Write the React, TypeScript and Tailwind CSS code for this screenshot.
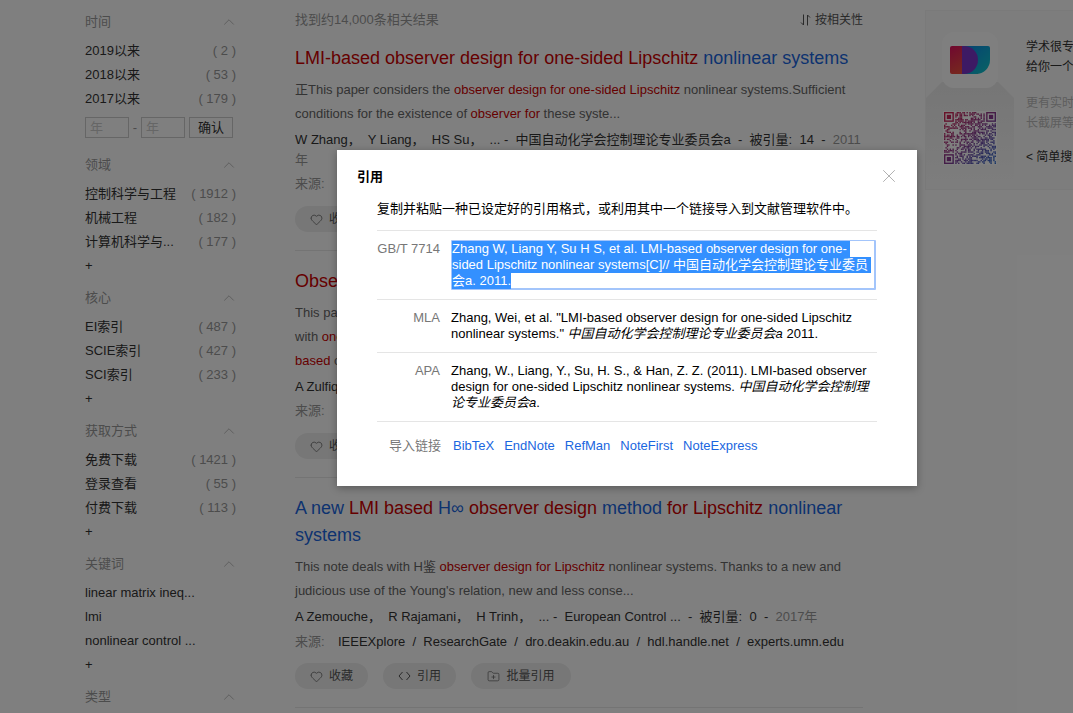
import React from "react";
import { ChevronUp, Heart, FolderPlus, X } from "lucide-react";

const FONT = "font-['Liberation_Sans','Noto_Sans_CJK_SC',sans-serif]";

function Section({ title, rows, more = true, children }: { title: string; rows?: [string, string?][]; more?: boolean; children?: React.ReactNode }) {
  return (
    <div className="mb-[9px]">
      <div className="flex h-6 items-center justify-between mb-1 text-[#999]">
        <span>{title}</span>
        <ChevronUp size={18} strokeWidth={1} className="text-[#aaa] mr-[-2px]" />
      </div>
      {rows?.map(([a, b]) => (
        <div key={a} className="flex h-6 pt-[2px] items-center justify-between text-[#333]">
          <span className="whitespace-nowrap">{a}</span>
          {b && <span className="text-[#999] whitespace-nowrap">( {b} )</span>}
        </div>
      ))}
      {more && <div className="h-6 leading-[26px] text-[#333]">+</div>}
      {children}
    </div>
  );
}

function R({ children }: { children: React.ReactNode }) {
  return <span className="text-[#c00]">{children}</span>;
}

function Actions({ tight = false }: { tight?: boolean }) {
  const cls = "flex items-center justify-center gap-[6px] h-[26px] rounded-full bg-[#eee] text-[#555] text-[12px]";
  return (
    <div className={`flex gap-[15px] ${tight ? "mt-[11px]" : "mt-3"}`}>
      <div className={`${cls} w-[73px]`}>
        <Heart size={13} strokeWidth={1.3} />
        <span>收藏</span>
      </div>
      <div className={`${cls} w-[73px]`}>
        <svg width="13" height="12" viewBox="0 0 13 12" fill="none" stroke="#555" strokeWidth="1">
          <path d="M4.5 2L1 6l3.5 4" />
          <path d="M8.5 2L12 6l-3.5 4" />
        </svg>
        <span>引用</span>
      </div>
      <div className={`${cls} w-[100px]`}>
        <FolderPlus size={13} strokeWidth={1.2} />
        <span>批量引用</span>
      </div>
    </div>
  );
}

function Sort() {
  return (
    <svg width="11" height="12" viewBox="0 0 11 12" fill="none" stroke="#555" strokeWidth="1">
      <path d="M3.5 0.5V11L1 8.5" />
      <path d="M7.5 11.5V1L10 3.5" />
    </svg>
  );
}

function Qr() {
  const n = 37;
  const cells: React.ReactNode[] = [];
  for (let y = 0; y < n; y++) {
    for (let x = 0; x < n; x++) {
      const near = (x < 8 && y < 8) || (x > n - 9 && y < 8) || (x < 8 && y > n - 9);
      if (near) continue;
      const v = Math.sin(x * 12.9898 + y * 78.233) * 43758.5453;
      if (v - Math.floor(v) > 0.52) cells.push(<rect key={`${x}-${y}`} x={x} y={y} width="1" height="1" />);
    }
  }
  const F = ({ x, y }: { x: number; y: number }) => (
    <g>
      <rect x={x + 0.5} y={y + 0.5} width="6" height="6" fill="none" stroke="url(#qr)" />
      <rect x={x + 2} y={y + 2} width="3" height="3" fill="url(#qr)" />
    </g>
  );
  return (
    <svg width="52" height="52" viewBox="0 0 37 37" className="block">
      <defs>
        <linearGradient id="qr" gradientUnits="userSpaceOnUse" x1="0" y1="0" x2="37" y2="37">
          <stop offset="0" stopColor="#d8254f" />
          <stop offset="0.5" stopColor="#8a3a90" />
          <stop offset="1" stopColor="#2f6fd0" />
        </linearGradient>
      </defs>
      <g fill="url(#qr)">{cells}</g>
      <F x={0} y={0} />
      <F x={30} y={0} />
      <F x={0} y={30} />
    </svg>
  );
}

function Logo() {
  return (
    <svg width="40" height="29" viewBox="0 0 40 29">
      <defs>
        <linearGradient id="lg1" x1="0" y1="0" x2="0.6" y2="1">
          <stop offset="0" stopColor="#e0105f" />
          <stop offset="1" stopColor="#ef5a3a" />
        </linearGradient>
        <linearGradient id="lg2" x1="0" y1="0" x2="1" y2="1">
          <stop offset="0" stopColor="#0c84e8" />
          <stop offset="1" stopColor="#10c8c8" />
        </linearGradient>
      </defs>
      <path d="M2 0H28V28H2a2 2 0 0 1-2-2V2a2 2 0 0 1 2-2Z" fill="url(#lg1)" />
      <path d="M12 0H38a2 2 0 0 1 2 2V14A14 14 0 0 1 26 28H12Z" fill="url(#lg2)" />
      <path d="M12 0H14A14 14 0 0 1 28 14V14A14 14 0 0 1 14 28H12Z" fill="#7b35c8" />
    </svg>
  );
}

export default function App() {
  return (
    <div className={`relative flex w-[1073px] h-[713px] overflow-hidden bg-white text-[13px] ${FONT}`}>
      <aside className="w-[151px] ml-[85px] pt-[10px] shrink-0">
        <Section title="时间" more={false} rows={[["2019以来", "2"], ["2018以来", "53"], ["2017以来", "179"]]}>
          <div className="flex items-center mt-[7px] mb-[15px] h-[21px]">
            <div className="w-[44px] h-[21px] border border-[#ccc] pl-1 leading-[19px] text-[#ccc]">年</div>
            <span className="w-[12px] text-center text-[#999]">-</span>
            <div className="w-[44px] h-[21px] border border-[#ccc] pl-1 leading-[19px] text-[#ccc]">年</div>
            <div className="w-[44px] h-[21px] ml-[4px] border border-[#ccc] text-center leading-[19px] text-[#333]">确认</div>
          </div>
        </Section>
        <Section title="领域" rows={[["控制科学与工程", "1912"], ["机械工程", "182"], ["计算机科学与...", "177"]]} />
        <Section title="核心" rows={[["EI索引", "487"], ["SCIE索引", "427"], ["SCI索引", "233"]]} />
        <Section title="获取方式" rows={[["免费下载", "1421"], ["登录查看", "55"], ["付费下载", "113"]]} />
        <Section title="关键词" rows={[["linear matrix ineq..."], ["lmi"], ["nonlinear control ..."]]} />
        <Section title="类型" more={false} />
      </aside>

      <main className="w-[568px] ml-[59px] pt-2 shrink-0">
        <div className="flex h-6 items-center justify-between text-[#999]">
          <span>找到约14,000条相关结果</span>
          <span className="flex items-center gap-[4px] text-[12px] text-[#555]"><Sort />按相关性</span>
        </div>

        <article className="pb-[18px] border-b border-[#e8e8e8]">
          <h3 className="mt-[13px] text-[18px] leading-[27px] text-[#1a66e0]"><R>LMI-based observer design for one-sided Lipschitz</R> nonlinear systems</h3>
          <p className="mt-[6px] leading-6 text-[#666]">正This paper considers the <R>observer design for one-sided Lipschitz</R> nonlinear systems.Sufficient conditions for the existence of <R>observer for</R> these syste...</p>
          <p className="mt-1 leading-5 text-[#333] whitespace-pre-wrap">W Zhang，  Y Liang，  HS Su，  ... -  中国自动化学会控制理论专业委员会a  -  被引量:  14  -  <span className="text-[#999]">2011年</span></p>
          <p className="mt-1 leading-5 text-[#999]">来源:</p>
          <Actions />
        </article>

        <article className="pb-[18px] border-b border-[#e8e8e8]">
          <h3 className="mt-[17px] text-[18px] leading-[27px] text-[#1a66e0]"><R>Observer design</R></h3>
          <p className="mt-[6px] leading-6 text-[#666] h-[72px]">
            This paper<br />with <R>one</R><br /><R>based</R> o
          </p>
          <p className="mt-1 leading-5 text-[#333]">A Zulfiqar</p>
          <p className="mt-1 leading-5 text-[#999]">来源:</p>
          <Actions />
        </article>

        <article className="pb-[18px] border-b border-[#e8e8e8]">
          <h3 className="mt-[17px] text-[18px] leading-[27px] text-[#1a66e0]">A new <R>LMI based</R> H∞ <R>observer design</R> method <R>for Lipschitz</R> nonlinear systems</h3>
          <p className="mt-[6px] leading-6 text-[#666]">This note deals with H鉴 <R>observer design for Lipschitz</R> nonlinear systems. Thanks to a new and judicious use of the Young's relation, new and less conse...</p>
          <p className="mt-1 leading-5 text-[#333] whitespace-pre-wrap">A Zemouche，  R Rajamani，  H Trinh，  ... -  European Control ...  -  被引量:  0  -  <span className="text-[#999]">2017年</span></p>
          <p className="mt-[5px] flex leading-5 text-[#333] whitespace-pre-wrap"><span className="w-[43px] text-[#999]">来源:</span><span>IEEEXplore  /  ResearchGate  /  dro.deakin.edu.au  /  hdl.handle.net  /  experts.umn.edu</span></p>
          <Actions tight />
        </article>
      </main>

      <section className="ml-[62px] mt-[10px] w-[300px] h-[180px] shrink-0 flex bg-[#fafafa] border border-[#f4f4f4]">
        <div className="relative w-[88px] shrink-0">
          <svg className="absolute left-0 top-[71px] w-[88px] h-[98px]" viewBox="0 0 88 98" preserveAspectRatio="none">
            <defs>
              <linearGradient id="flap" x1="0" y1="0" x2="0" y2="1">
                <stop offset="0" stopColor="#ececec" />
                <stop offset="1" stopColor="#fafafa" />
              </linearGradient>
            </defs>
            <path d="M0 16L16 0H72L88 16V98H0Z" fill="url(#flap)" />
          </svg>
          <div className="relative flex flex-col items-center">
            <div className="mt-[21px] w-[56px] h-[56px] rounded-[12px] bg-white flex items-center justify-center">
              <Logo />
            </div>
            <div className="mt-[23px] bg-white p-[1px]"><Qr /></div>
          </div>
        </div>
        <div className="ml-3 whitespace-nowrap text-[12px]">
          <div className="mt-[26px] leading-5 text-[#333]">学术很专业</div>
          <div className="leading-5 text-[#333]">给你一个</div>
          <div className="mt-4 leading-5 text-[#bbb]">更有实时</div>
          <div className="leading-5 text-[#bbb]">长截屏等</div>
          <div className="mt-[14px] leading-5 text-[#333]">&lt; 简单搜索</div>
        </div>
      </section>

      <div className="absolute inset-0 bg-black/50" />

      <div className="absolute left-[337px] top-[150px] w-[580px] h-[336px] bg-white px-[40px] text-black shadow-[0_2px_8px_rgba(0,0,0,0.3)]">
        <div className="absolute left-[20px] top-[18px] text-[13px] font-semibold leading-[18px]">引用</div>
        <X size={22} strokeWidth={1} className="absolute right-[17px] top-[15px] text-[#aaa]" />
        <div className="pt-[51px] h-[81px] leading-[16px] border-b border-[#e5e5e5]">复制并粘贴一种已设定好的引用格式，或利用其中一个链接导入到文献管理软件中。</div>

        <div className="flex pt-[9px] h-[69px] border-b border-[#e5e5e5] leading-4">
          <div className="w-[63px] text-right text-[#777] pt-[1px] shrink-0">GB/T 7714</div>
          <div className="ml-[11px] w-[425px] h-[50px] border-t border-l border-r-2 border-b-2 border-[#a3c5fb] rounded-[1px] text-white shrink-0 mr-[-2px] leading-[16px]">
            <span className="block w-fit bg-[#3390ff] pr-[3px] whitespace-nowrap">Zhang W, Liang Y, Su H S, et al. LMI-based observer design for one-</span>
            <span className="block w-fit bg-[#3390ff] pr-[3px] whitespace-nowrap">sided Lipschitz nonlinear systems[C]// 中国自动化学会控制理论专业委员</span>
            <span className="block w-fit bg-[#3390ff] whitespace-nowrap">会a. 2011.</span>
          </div>
        </div>

        <div className="flex pt-[10px] h-[53px] border-b border-[#e5e5e5] leading-4">
          <div className="w-[63px] text-right text-[#777] shrink-0">MLA</div>
          <div className="ml-[11px] w-[420px]">Zhang, Wei, et al. "LMI-based observer design for one-sided Lipschitz nonlinear systems." <i>中国自动化学会控制理论专业委员会a</i> 2011.</div>
        </div>

        <div className="flex pt-[10px] h-[69px] border-b border-[#e5e5e5] leading-4">
          <div className="w-[63px] text-right text-[#777] shrink-0">APA</div>
          <div className="ml-[11px] w-[422px]">Zhang, W., Liang, Y., Su, H. S., &amp; Han, Z. Z. (2011). LMI-based observer design for one-sided Lipschitz nonlinear systems. <i>中国自动化学会控制理论专业委员会a</i>.</div>
        </div>

        <div className="flex pt-[16px] leading-4">
          <div className="w-[64px] text-right text-[#777] shrink-0">导入链接</div>
          <div className="ml-[12px] flex gap-[10px] text-[#1a66e0]">
            <span>BibTeX</span><span>EndNote</span><span>RefMan</span><span>NoteFirst</span><span>NoteExpress</span>
          </div>
        </div>
      </div>
    </div>
  );
}
